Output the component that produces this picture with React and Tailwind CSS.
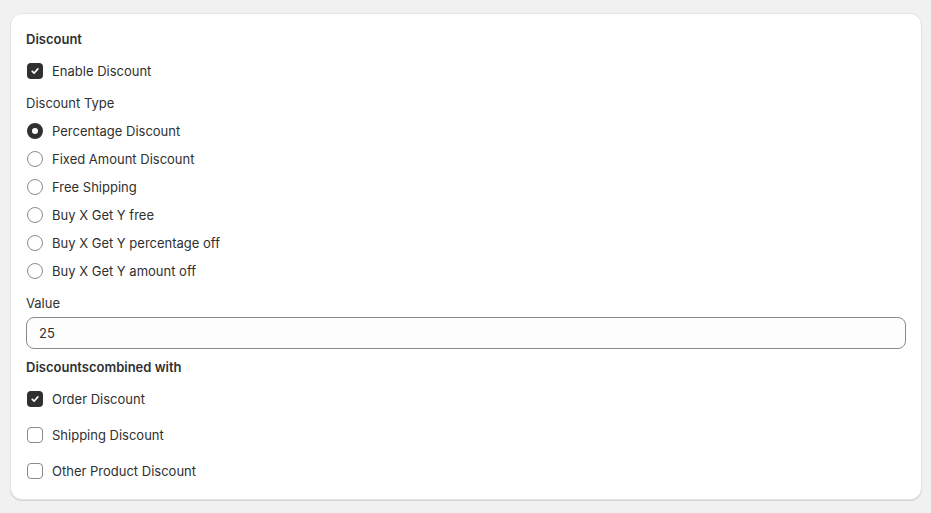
import { useState } from 'react'

const tipos = [
  'Percentage Discount',
  'Fixed Amount Discount',
  'Free Shipping',
  'Buy X Get Y free',
  'Buy X Get Y percentage off',
  'Buy X Get Y amount off',
]

function Check({ checked, onChange, label }) {
  return (
    <label className="flex items-center h-5 gap-[7px] cursor-pointer" onClick={onChange}>
      <span className="w-5 h-5 flex items-center justify-center">
        {checked ? (
          <span className="w-4 h-4 rounded-[4px] bg-[#303030] flex items-center justify-center">
            <svg width="10" height="10" viewBox="0 0 10 10" fill="none">
              <path d="M2.2 5.2 4.1 7.1 7.9 2.9" stroke="white" strokeWidth="1.6" strokeLinecap="round" strokeLinejoin="round" />
            </svg>
          </span>
        ) : (
          <span className="w-4 h-4 rounded-[4px] border border-[#8a8a8a] bg-white"></span>
        )}
      </span>
      <span>{label}</span>
    </label>
  )
}

function Radio({ checked, onChange, label }) {
  return (
    <label className="flex items-center h-5 gap-[7px] cursor-pointer" onClick={onChange}>
      <span className="w-5 h-5 flex items-center justify-center">
        {checked ? (
          <span className="w-4 h-4 rounded-full border-[5px] border-[#303030] bg-white"></span>
        ) : (
          <span className="w-4 h-4 rounded-full border border-[#8a8a8a] bg-white"></span>
        )}
      </span>
      <span>{label}</span>
    </label>
  )
}

export default function App() {
  const [ activo, setActivo ] = useState(true)
  const [ tipo, setTipo ] = useState(0)
  const [ valor, setValor ] = useState('25')
  const [ combina, setCombina ] = useState({ order: true, shipping: false, product: false })

  return (
    <div className="min-h-[513px] bg-[#f1f1f1] pl-[10px] pr-[9px] pt-[13px] text-[13px] leading-5 text-[#303030]" style={{ fontFamily: 'Inter, "Noto Sans", sans-serif' }}>
      <div className="bg-white rounded-xl border border-[#e3e3e3] shadow-[0_1px_0_0_#d4d4d4] pl-[15px] pr-[15px] pt-[15px] pb-[18px]">
        <h2 className="font-semibold">Discount</h2>

        <div className="mt-3 -ml-[1px]">
          <Check checked={activo} onChange={() => setActivo(!activo)} label="Enable Discount" />
        </div>

        <p className="mt-3">Discount Type</p>
        <div className="mt-2 flex flex-col gap-2 -ml-[1px]">
          {tipos.map((t, i) => (
            <Radio key={t} checked={tipo === i} onChange={() => setTipo(i)} label={t} />
          ))}
        </div>

        <label className="block mt-3" htmlFor="valor">Value</label>
        <input
          id="valor"
          type="text"
          className="mt-1 block w-full h-8 px-3 rounded-lg border border-[#8a8a8a] bg-[#fdfdfd] outline-none"
          value={valor}
          onChange={e => setValor(e.target.value)}
        />

        <h3 className="mt-2 font-semibold">Discountscombined with</h3>
        <div className="mt-3 flex flex-col gap-4 -ml-[1px]">
          <Check checked={combina.order} onChange={() => setCombina({ ...combina, order: !combina.order })} label="Order Discount" />
          <Check checked={combina.shipping} onChange={() => setCombina({ ...combina, shipping: !combina.shipping })} label="Shipping Discount" />
          <Check checked={combina.product} onChange={() => setCombina({ ...combina, product: !combina.product })} label="Other Product Discount" />
        </div>
      </div>
    </div>
  )
}
